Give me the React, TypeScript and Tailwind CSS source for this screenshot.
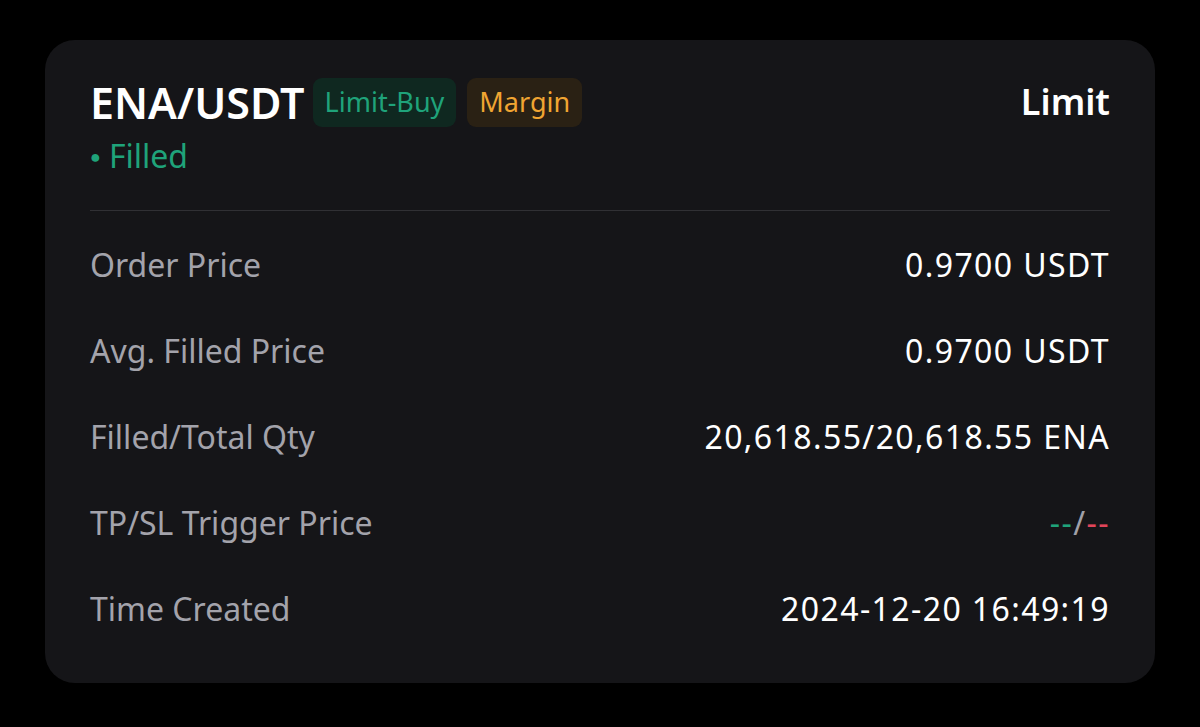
const rows: { label: string; value: React.ReactNode }[] = [
    { label: 'Order Price', value: '0.9700 USDT' },
    { label: 'Avg. Filled Price', value: '0.9700 USDT' },
    { label: 'Filled/Total Qty', value: '20,618.55/20,618.55 ENA' },
    {
        label: 'TP/SL Trigger Price',
        value: (
            <span>
                <span className="text-[#1fa37a]">--</span>
                <span className="text-[#a0a0a8]">/</span>
                <span className="text-[#e0455a]">--</span>
            </span>
        ),
    },
    { label: 'Time Created', value: '2024-12-20 16:49:19' },
];

export default function App() {
    return (
        <div className="w-[1200px] h-[727px] bg-black pt-[40px] px-[45px]" style={{ fontFamily: '"Noto Sans", "Open Sans", sans-serif' }}>
            <div className="h-[643px] rounded-[30px] bg-[#151518] px-[45px] pt-[37px] pb-[32px]">
                <div className="flex items-center justify-between h-[50px]">
                    <div className="flex items-center">
                        <span className="text-[43px] font-semibold text-white leading-none">ENA/USDT</span>
                        <span className="ml-[8px] h-[49px] px-[12px] flex items-center rounded-[9px] bg-[#0f2820] text-[#1fa37a] text-[27px]">Limit-Buy</span>
                        <span className="ml-[11px] h-[49px] px-[12px] flex items-center rounded-[9px] bg-[#2a2114] text-[#f0a532] text-[27px]">Margin</span>
                    </div>
                    <span className="text-[36px] font-semibold text-white leading-none">Limit</span>
                </div>
                <div className="h-[36px] mt-[11px] flex items-center text-[32px] text-[#1fa37a]">
                    <span className="text-[18px] mr-[8px]">●</span>
                    <span>Filled</span>
                </div>
                <div className="mt-[36px] h-px bg-[#303034]" />
                <div className="mt-[11px]">
                    {rows.map((r) => (
                        <div key={r.label} className="h-[86px] flex items-center justify-between">
                            <span className="text-[#a3a3ab] text-[32px]">{r.label}</span>
                            <span className="text-white text-[32px] tracking-[1.4px]">{r.value}</span>
                        </div>
                    ))}
                </div>
            </div>
        </div>
    );
}
